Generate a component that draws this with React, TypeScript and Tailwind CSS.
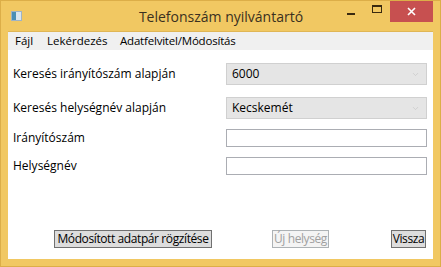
import { ChevronDown } from 'lucide-react';

const font = { fontFamily: '"Open Sans", "Noto Sans", sans-serif' };

function Label({ text }: { text: string }) {
    return <span className="text-[12px] text-black">{text}</span>;
}

export default function App() {
    return (
        <div className="w-[441px] h-[267px] bg-[#f1c862] flex flex-col border border-[#dcae48]" style={font}>
            <div className="h-[30px] flex items-center">
                <div className="ml-[10px] w-[11px] h-[10px] bg-[#d9e6ef] border border-[#9fb3c4] flex">
                    <div className="w-[4px] h-full bg-[#4a8fb5]" />
                </div>
                <span className="flex-1 text-center text-[14px] text-[#3a3020] pl-[82px] whitespace-nowrap">Telefonszám nyilvántartó</span>
                <div className="flex items-start self-start h-[21px]">
                    <div className="w-[26px] h-[21px] flex items-center justify-center">
                        <div className="w-[8px] h-[2px] bg-[#3a2a10] mt-[4px]" />
                    </div>
                    <div className="w-[26px] h-[21px] flex items-center justify-center">
                        <div className="w-[10px] h-[8px] border border-[#3a2a10] border-t-2 -mt-[5px]" />
                    </div>
                    <div className="w-[43px] h-[21px] bg-[#c75050] flex items-center justify-center mr-[7px]">
                        <svg width="9" height="9" viewBox="0 0 9 9">
                            <path d="M1 1L8 8M8 1L1 8" stroke="white" strokeWidth="1.6" />
                        </svg>
                    </div>
                </div>
            </div>
            <div className="flex-1 mx-[7px] mb-[7px] bg-white flex flex-col border-t border-[#e0b655]">
                <div className="h-[18px] bg-[#f0f0f0] flex items-center text-[11.5px] text-black whitespace-nowrap pl-[7px]">
                    <span className="w-[32px]">Fájl</span>
                    <span className="w-[73px]">Lekérdezés</span>
                    <span className="tracking-[-0.2px]">Adatfelvitel/Módosítás</span>
                </div>
                <div className="flex flex-col pt-[13px] pl-[5px] pr-[6px]">
                    <div className="flex items-center justify-between h-[22px]">
                        <Label text="Keresés irányítószám alapján" />
                        <div className="w-[201px] h-[22px] bg-[#e5e5e5] border border-[#d0d0d0] flex items-center justify-between pl-[5px] pr-[6px] text-[12px]">
                            <span>6000</span>
                            <ChevronDown size={9} className="text-[#c8c8c8]" />
                        </div>
                    </div>
                    <div className="flex items-center justify-between h-[22px] mt-[12px]">
                        <Label text="Keresés helységnév alapján" />
                        <div className="w-[201px] h-[22px] bg-[#e5e5e5] border border-[#d0d0d0] flex items-center justify-between pl-[5px] pr-[6px] text-[12px]">
                            <span>Kecskemét</span>
                            <ChevronDown size={9} className="text-[#c8c8c8]" />
                        </div>
                    </div>
                    <div className="flex items-center justify-between h-[18px] mt-[10px]">
                        <Label text="Irányítószám" />
                        <div className="w-[201px] h-[18px] border border-[#abadb3] bg-white" />
                    </div>
                    <div className="flex items-center justify-between h-[18px] mt-[10px]">
                        <Label text="Helységnév" />
                        <div className="w-[201px] h-[18px] border border-[#abadb3] bg-white" />
                    </div>
                </div>
                <div className="flex-1" />
                <div className="flex items-center mb-[11px] pl-[46px] text-[12px] whitespace-nowrap">
                    <button className="w-[158px] h-[18px] bg-[#dddddd] border border-[#707070] flex items-center justify-center text-black leading-none tracking-[-0.4px] px-0">
                        Módosított adatpár rögzítése
                    </button>
                    <button className="ml-[60px] w-[57px] h-[18px] bg-[#f4f4f4] border border-[#adb2b5] flex items-center justify-center text-[#a0a0a0] leading-none tracking-[-0.4px] px-0">
                        Új helység
                    </button>
                    <button className="ml-[62px] w-[35px] h-[18px] bg-[#dddddd] border border-[#707070] flex items-center justify-center text-black leading-none tracking-[-0.4px] px-0">
                        Vissza
                    </button>
                </div>
            </div>
        </div>
    );
}
